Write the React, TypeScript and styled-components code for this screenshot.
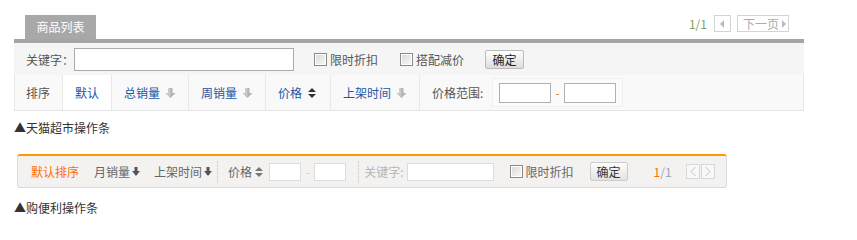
import React from "react"
import styled, { createGlobalStyle } from "styled-components"

const GlobalStyle = createGlobalStyle`
  body {
    margin: 0;
    background: #fff;
    font-family: "Noto Sans CJK SC", "Liberation Sans", sans-serif;
    font-size: 12px;
    color: #333;
  }
`

const Page = styled.div`
  padding: 15px 14px 0;
  width: 790px;
`

/* ---------- 天猫超市 ---------- */

const TopHead = styled.div`
  display: flex;
  align-items: flex-end;
  justify-content: space-between;
  height: 24px;
`

const Tab = styled.div`
  margin-left: 11px;
  width: 71px;
  height: 24px;
  line-height: 24px;
  text-align: center;
  background: #a8a8a8;
  color: #fff;
  font-size: 12px;
`

const Pager = styled.div`
  display: flex;
  align-items: center;
  gap: 6px;
  align-self: flex-start;
  margin-right: 15px;
`

const PageNum = styled.span`
  color: #7f9f5f;
  margin-right: 1px;
`

const PageBtn = styled.span<{ $wide?: boolean }>`
  display: inline-flex;
  align-items: center;
  justify-content: center;
  gap: 2px;
  height: 15px;
  padding: ${(p) => (p.$wide ? "0 2px 0 5px" : "0 5px")};
  border: 1px solid #d4d4d4;
  color: #aaa;
  line-height: 15px;
`

const Panel = styled.div`
  border-top: 4px solid #a5a5a5;
`

const FilterRow = styled.div`
  display: flex;
  align-items: center;
  height: 32px;
  padding-left: 12px;
  background: #f5f5f5;
  color: #555;
`

const TextInput = styled.span<{ $w: number; $h: number; $c?: string }>`
  display: inline-block;
  box-sizing: border-box;
  width: ${(p) => p.$w}px;
  height: ${(p) => p.$h}px;
  border: 1px solid ${(p) => p.$c ?? "#aaa"};
  background: #fff;
`

const Check = styled.label<{ $ml: number }>`
  display: inline-flex;
  align-items: center;
  gap: 3px;
  margin-left: ${(p) => p.$ml}px;
`

const Box = styled.span`
  display: inline-block;
  box-sizing: border-box;
  width: 13px;
  height: 13px;
  border: 1px solid #8a8a8a;
  background: linear-gradient(135deg, #d8d8d8, #fafafa);
  box-shadow: inset 0 0 0 1px #fff;
`

const Button = styled.span<{ $ml: number }>`
  display: inline-block;
  box-sizing: border-box;
  margin-left: ${(p) => p.$ml}px;
  width: 39px;
  height: 19px;
  line-height: 17px;
  text-align: center;
  border: 1px solid #bbb;
  border-radius: 2px;
  background: linear-gradient(#fff, #ddd);
  color: #222;
`

const SortRow = styled.div`
  display: flex;
  height: 35px;
  background: #f9f9f9;
  border-left: 1px solid #e8e8e8;
  border-right: 1px solid #e8e8e8;
  border-bottom: 1px solid #e4e4e4;
`

const SortCell = styled.div<{ $active?: boolean; $link?: boolean; $first?: boolean }>`
  display: flex;
  align-items: center;
  gap: 5px;
  padding: 0 12px 0 ${(p) => (p.$first ? 11 : 12)}px;
  border-right: 1px solid #e8e8e8;
  background: ${(p) => (p.$active ? "#fff" : "transparent")};
  color: ${(p) => (p.$link ? "#2156a8" : "#555")};
  font-size: 12px;
`

const RangeCell = styled.div`
  display: flex;
  align-items: center;
  padding-left: 12px;
  color: #555;
`

const RangeBox = styled.div`
  display: flex;
  align-items: center;
  gap: 4px;
  margin-left: 9px;
  padding: 0 6px;
  height: 27px;
  background: #fbfbfb;
  border: 1px solid #f0f0f0;
  color: #e08a30;
`

const Caption = styled.div<{ $mt: number }>`
  margin-top: ${(p) => p.$mt}px;
  line-height: 16px;
  color: #333;
`

/* ---------- 购便利 ---------- */

const Bar = styled.div`
  display: flex;
  align-items: center;
  box-sizing: border-box;
  margin: 18px 0 0 3px;
  width: 710px;
  height: 34px;
  padding-left: 13px;
  background: #f3f2f0;
  border: 1px solid #dcdbd8;
  border-top: 2px solid #ff9900;
  border-radius: 3px;
  color: #666;
`

const BarItem = styled.span<{ $on?: boolean; $ml?: number }>`
  display: inline-flex;
  align-items: center;
  gap: 2px;
  margin-left: ${(p) => p.$ml ?? 0}px;
  color: ${(p) => (p.$on ? "#ff6d00" : "#666")};
`

const Dotted = styled.span<{ $ml: number }>`
  display: inline-block;
  margin-left: ${(p) => p.$ml}px;
  height: 22px;
  border-left: 1px dotted #c8c8c8;
`

const Muted = styled.span<{ $ml: number }>`
  margin-left: ${(p) => p.$ml}px;
  color: #b5b5b5;
`

const Dash = styled.span`
  margin: 0 4px 0 5px;
  color: #ccc;
`

const BarInput = styled(TextInput)<{ $ml?: number }>`
  margin-left: ${(p) => p.$ml ?? 0}px;
`

const SmallButton = styled.span`
  display: inline-block;
  box-sizing: border-box;
  margin-left: 16px;
  width: 38px;
  height: 19px;
  line-height: 17px;
  text-align: center;
  border: 1px solid #ccc;
  border-radius: 2px;
  background: linear-gradient(#fdfdfd, #e2e2e2);
  color: #333;
`

const Fraction = styled.span`
  margin-left: 26px;
  color: #9aa8b0;
  & b {
    font-weight: normal;
    color: #ff6d00;
  }
`

const ArrowPair = styled.span`
  display: inline-flex;
  margin-left: 14px;
`

const ArrowBox = styled.span`
  display: inline-flex;
  align-items: center;
  justify-content: center;
  box-sizing: border-box;
  width: 14px;
  height: 15px;
  border: 1px solid #d8d8d8;
  background: #f8f8f8;
  & + & {
    margin-left: 1px;
  }
`

const GrayDown = () => (
  <svg width="11" height="12" viewBox="0 0 11 12">
    <path d="M3.5 1h4v5h3l-5 5-5-5h3z" fill="#b3b3b3" />
    <path d="M3.5 1h2v9L.5 6h3z" fill="#c8c8c8" />
  </svg>
)

const UpDown = ({ color = "#333" }: { color?: string }) => (
  <svg width="11" height="12" viewBox="0 0 11 12">
    <path d="M5 1 9 5H1z M5 11 1 7h8z" fill={color} />
  </svg>
)

const SolidDown = () => (
  <svg width="8" height="11" viewBox="0 0 8 11">
    <path d="M2.5 1h3v4H8l-4 5-4-5h2.5z" fill="#555" />
  </svg>
)

const Tri = ({ dir }: { dir: "l" | "r" }) => (
  <svg width="5" height="8" viewBox="0 0 5 8">
    <path d={dir === "l" ? "M4 0v8L0 4z" : "M1 0v8l4-4z"} fill="#bbb" />
  </svg>
)

const Chevron = ({ dir }: { dir: "l" | "r" }) => (
  <svg width="8" height="11" viewBox="0 0 8 11">
    <path d={dir === "l" ? "M6.5 1 2 5.5 6.5 10" : "M1.5 1 6 5.5 1.5 10"} fill="none" stroke="#c4c4c4" />
  </svg>
)

const App: React.FC = () => (
  <Page>
    <GlobalStyle />
    <TopHead>
      <Tab>商品列表</Tab>
      <Pager>
        <PageNum>1/1</PageNum>
        <PageBtn>
          <Tri dir="l" />
        </PageBtn>
        <PageBtn $wide>
          下一页
          <Tri dir="r" />
        </PageBtn>
      </Pager>
    </TopHead>
    <Panel>
      <FilterRow>
        关键字：
        <TextInput $w={220} $h={23} />
        <Check $ml={20}>
          <Box />
          限时折扣
        </Check>
        <Check $ml={22}>
          <Box />
          搭配减价
        </Check>
        <Button $ml={21}>确定</Button>
      </FilterRow>
      <SortRow>
        <SortCell $first>排序</SortCell>
        <SortCell $active $link>
          默认
        </SortCell>
        <SortCell $link>
          总销量 <GrayDown />
        </SortCell>
        <SortCell $link>
          周销量 <GrayDown />
        </SortCell>
        <SortCell $link>
          价格 <UpDown />
        </SortCell>
        <SortCell $link>
          上架时间 <GrayDown />
        </SortCell>
        <RangeCell>
          价格范围:
          <RangeBox>
            <TextInput $w={52} $h={20} $c="#b0b0b0" />-
            <TextInput $w={52} $h={20} $c="#b0b0b0" />
          </RangeBox>
        </RangeCell>
      </SortRow>
    </Panel>
    <Caption $mt={9}>▲天猫超市操作条</Caption>

    <Bar>
      <BarItem $on>默认排序</BarItem>
      <BarItem $ml={15}>
        月销量
        <SolidDown />
      </BarItem>
      <BarItem $ml={14}>
        上架时间
        <SolidDown />
      </BarItem>
      <Dotted $ml={5} />
      <BarItem $ml={10}>
        价格
        <UpDown color="#777" />
      </BarItem>
      <BarInput $w={32} $h={18} $c="#dcdcdc" $ml={4} />
      <Dash>-</Dash>
      <BarInput $w={32} $h={18} $c="#dcdcdc" />
      <Dotted $ml={12} />
      <Muted $ml={5}>关键字:</Muted>
      <BarInput $w={87} $h={18} $c="#dcdcdc" $ml={3} />
      <Check $ml={16}>
        <Box />
        限时折扣
      </Check>
      <SmallButton>确定</SmallButton>
      <Fraction>
        <b>1</b>/1
      </Fraction>
      <ArrowPair>
        <ArrowBox>
          <Chevron dir="l" />
        </ArrowBox>
        <ArrowBox>
          <Chevron dir="r" />
        </ArrowBox>
      </ArrowPair>
    </Bar>
    <Caption $mt={12}>▲购便利操作条</Caption>
  </Page>
)

export default App
